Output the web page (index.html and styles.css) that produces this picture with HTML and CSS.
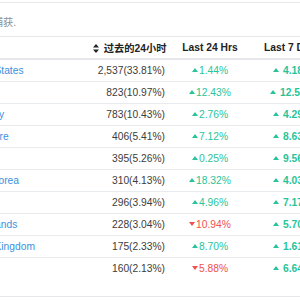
FILE: index.html
```html
<!DOCTYPE html>
<html>
<head>
<meta charset="utf-8">
<link rel="stylesheet" href="styles.css">
</head>
<body>
<div class="viewport">
  <div class="card">
    <p class="note">数据已捕获.</p>
    <table class="nodes">
      <colgroup>
        <col class="c-country"><col class="c-count"><col class="c-day"><col class="c-week">
      </colgroup>
      <thead>
        <tr>
          <th class="left">国家</th>
          <th class="right"><svg class="sort" width="6" height="9" viewBox="0 0 6 9"><path d="M3 0L6 3.6H0Z M3 9L6 5.4H0Z" fill="#222"/></svg> 过去的24小时</th>
          <th class="center">Last 24 Hrs</th>
          <th class="center">Last 7 Days</th>
        </tr>
      </thead>
      <tbody>
        <tr><td><a>United States</a></td><td class="right">2,537(33.81%)</td><td class="center up">1.44%</td><td class="center wk up">4.18%</td></tr>
        <tr><td><a>China</a></td><td class="right">823(10.97%)</td><td class="center up">12.43%</td><td class="center wk up">12.57%</td></tr>
        <tr><td><a>Germany</a></td><td class="right">783(10.43%)</td><td class="center up">2.76%</td><td class="center wk up">4.29%</td></tr>
        <tr><td><a>Singapore</a></td><td class="right">406(5.41%)</td><td class="center up">7.12%</td><td class="center wk up">8.63%</td></tr>
        <tr><td><a>France</a></td><td class="right">395(5.26%)</td><td class="center up">0.25%</td><td class="center wk up">9.56%</td></tr>
        <tr><td><a>South Korea</a></td><td class="right">310(4.13%)</td><td class="center up">18.32%</td><td class="center wk up">4.03%</td></tr>
        <tr><td><a>Canada</a></td><td class="right">296(3.94%)</td><td class="center up">4.96%</td><td class="center wk up">7.17%</td></tr>
        <tr><td><a>Netherlands</a></td><td class="right">228(3.04%)</td><td class="center down">10.94%</td><td class="center wk up">5.70%</td></tr>
        <tr><td><a>United Kingdom</a></td><td class="right">175(2.33%)</td><td class="center up">8.70%</td><td class="center wk up">1.61%</td></tr>
        <tr><td><a>Japan</a></td><td class="right">160(2.13%)</td><td class="center down">5.88%</td><td class="center wk up">6.64%</td></tr>
      </tbody>
    </table>
  </div>
</div>
</body>
</html>
```
FILE: styles.css
```css
html, body {
  margin: 0;
  padding: 0;
  background: #fff;
}
body {
  font-family: "Liberation Sans", Arial, "Noto Sans CJK SC", sans-serif;
  font-size: 10.25px;
  color: #333;
}
.viewport {
  width: 300px;
  height: 300px;
  overflow: hidden;
  padding-top: 2px;
  box-sizing: border-box;
}
.card {
  margin-left: -46px;
  width: 384px;
  border-top: 1px solid #e6e8eb;
  border-bottom: 1px solid #e6e8eb;
  padding-bottom: 17px;
}
.note {
  margin: 0;
  height: 33px;
  padding: 0 8px;
  box-sizing: border-box;
  display: flex;
  align-items: center;
  padding-top: 4px;
  color: #8a8f96;
}
.nodes {
  width: 384px;
  table-layout: fixed;
  border-collapse: collapse;
}
.c-country { width: 131px; }
.c-count { width: 88px; }
.c-day { width: 74px; }
.c-week { width: 91px; }
.nodes th, .nodes td {
  padding: 0 8px;
  height: 21px;
  white-space: nowrap;
  vertical-align: middle;
}
.nodes th {
  font-weight: bold;
  color: #222;
  border-top: 1px solid #e6e8eb;
  border-bottom: 2px solid #e6e8eb;
}
.nodes td {
  border-bottom: 1px solid #e9ecef;
  color: #3c3c3c;
}
.nodes tbody tr:last-child td {
  border-bottom: none;
}
.left { text-align: left; }
.right { text-align: right; }
.center { text-align: center; }
.nodes a {
  color: #3d8fe0;
}
.sort {
  vertical-align: -1px;
  margin-right: 2px;
}
.nodes td.up { color: #27c49a; }
.nodes td.down { color: #ef4f4f; }
.up::before, .down::before {
  content: "";
  display: inline-block;
  width: 0;
  height: 0;
  border-left: 3.5px solid transparent;
  border-right: 3.5px solid transparent;
  vertical-align: 2px;
  margin-right: 1px;
}
.up::before { border-bottom: 4px solid #27c49a; }
.down::before { border-top: 4px solid #ef4f4f; }
.wk { font-weight: bold; }
.wk::before { margin-right: 4px; }
```
